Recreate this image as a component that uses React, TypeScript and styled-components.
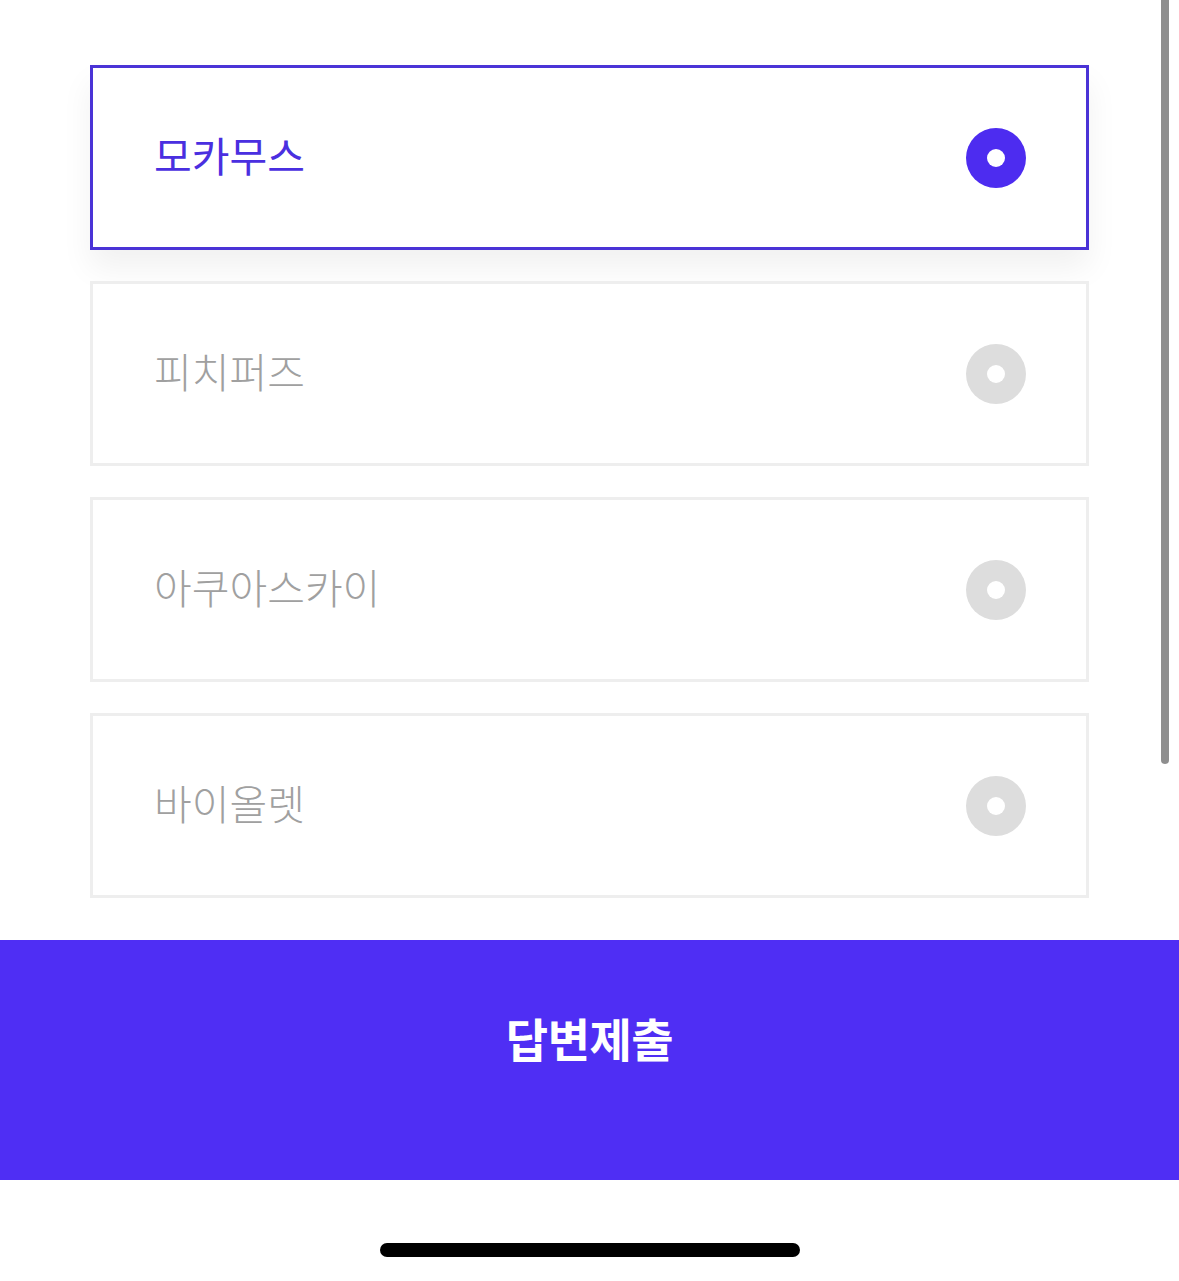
import React, { useState } from "react";
import styled, { createGlobalStyle } from "styled-components";

const Global = createGlobalStyle`
  html, body { margin: 0; padding: 0; background: #ffffff; }
  body { font-family: "Noto Sans CJK KR", "Noto Sans", sans-serif; overflow: hidden; }
`;

const Screen = styled.div`
  position: relative;
  width: 1179px;
  height: 1281px;
  display: flex;
  flex-direction: column;
  background: #fff;
`;

const List = styled.div`
  display: flex;
  flex-direction: column;
  gap: 31px;
  padding: 65px 0 0 90px;
  width: 999px;
`;

const Card = styled.button<{ $selected: boolean }>`
  box-sizing: border-box;
  height: 185px;
  width: 999px;
  display: flex;
  align-items: center;
  justify-content: space-between;
  padding: 0 60px 0 61px;
  background: #fff;
  border: 3px solid ${(p) => (p.$selected ? "#4a33d6" : "#eeeeee")};
  box-shadow: ${(p) => (p.$selected ? "0 18px 30px rgba(0,0,0,0.06)" : "none")};
  cursor: pointer;
  font: inherit;
`;

const Label = styled.span<{ $selected: boolean }>`
  font-size: 41px;
  letter-spacing: 0;
  font-weight: ${(p) => (p.$selected ? 400 : 300)};
  color: ${(p) => (p.$selected ? "#4a2fe0" : "#a0a0a0")};
  line-height: 1;
  margin-top: -6px;
`;

const Radio = styled.span<{ $selected: boolean }>`
  width: 60px;
  height: 60px;
  border-radius: 50%;
  background: ${(p) => (p.$selected ? "#4d2cf0" : "#dddddd")};
  display: flex;
  align-items: center;
  justify-content: center;
  &::after {
    content: "";
    width: 18px;
    height: 18px;
    border-radius: 50%;
    background: #fff;
  }
`;

const Submit = styled.button`
  margin-top: 42px;
  height: 240px;
  width: 100%;
  border: none;
  background: #4f2ef4;
  color: #fff;
  font-family: inherit;
  font-size: 46px;
  font-weight: 700;
  letter-spacing: -0.5px;
  display: flex;
  justify-content: center;
  align-items: flex-start;
  padding-top: 74px;
  box-sizing: border-box;
  line-height: 1;
`;

const HomeBar = styled.div`
  position: absolute;
  left: 380px;
  top: 1243px;
  width: 420px;
  height: 14px;
  border-radius: 7px;
  background: #000;
`;

const ScrollThumb = styled.div`
  position: absolute;
  left: 1161px;
  top: 0;
  width: 8px;
  height: 764px;
  border-radius: 0 0 4px 4px;
  background: #8e8e8e;
`;

const options = ["모카무스", "피치퍼즈", "아쿠아스카이", "바이올렛"];

export default function App() {
  const [sel, setSel] = useState(0);
  return (
    <Screen>
      <Global />
      <List>
        {options.map((o, i) => (
          <Card key={o} $selected={sel === i} onClick={() => setSel(i)}>
            <Label $selected={sel === i}>{o}</Label>
            <Radio $selected={sel === i} />
          </Card>
        ))}
      </List>
      <Submit>답변제출</Submit>
      <ScrollThumb />
      <HomeBar />
    </Screen>
  );
}
